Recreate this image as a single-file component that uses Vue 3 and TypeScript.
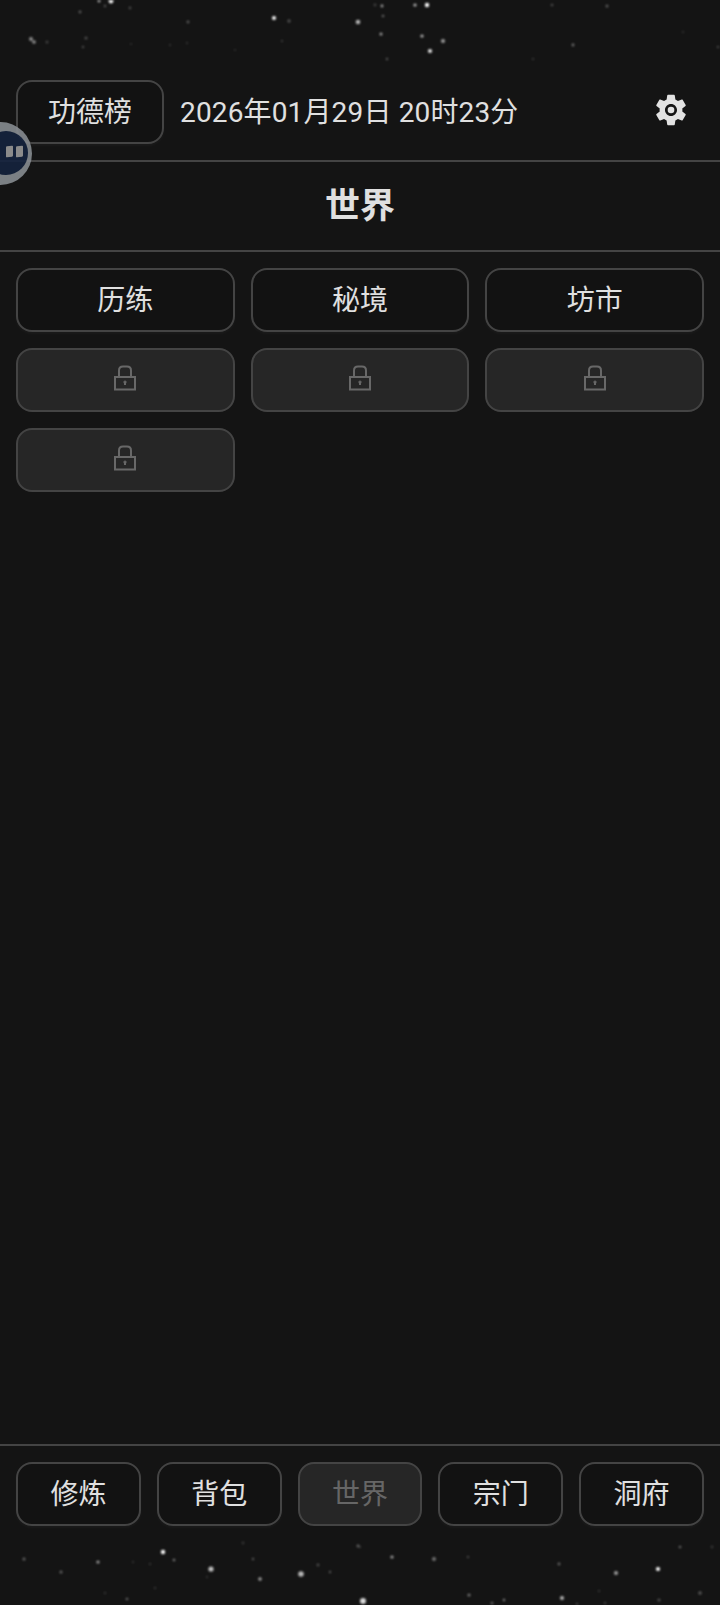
<script setup lang="ts">
interface Star {
  x: number
  y: number
  r: number
  o: number
}

// x, y, radius, opacity
const rawStars: number[][] = [
  [111, 1, 2.4, 1], [99, 1, 1.4, 0.7], [105, 6, 1.2, 0.3], [130, 8, 1.4, 0.22], [80, 12, 1.4, 0.3],
  [274, 18, 2, 1], [289, 21, 1.7, 0.25], [188, 22, 1.4, 0.3], [358, 22, 2.3, 0.7], [375, 5, 1.4, 0.2],
  [382, 6, 1.4, 0.6], [415, 5, 1.6, 0.7], [427, 5, 2.2, 1], [383, 16, 1.3, 0.35], [381, 34, 1.5, 0.6],
  [422, 36, 1.6, 0.7], [443, 41, 2, 0.6], [430, 51, 2.1, 0.9], [387, 59, 1.2, 0.3], [552, 5, 1.3, 0.25],
  [607, 6, 1.5, 0.3], [573, 45, 1.4, 0.4], [533, 59, 1.2, 0.15], [683, 32, 1.3, 0.1], [718, 47, 1.3, 0.2],
  [31, 39, 1.9, 0.55], [34, 42, 1.8, 0.55], [47, 42, 1.5, 0.2], [86, 38, 1.5, 0.25], [83, 47, 1.2, 0.25],
  [282, 41, 1.2, 0.16], [187, 43, 1.2, 0.12], [170, 45, 1.2, 0.12], [131, 44, 1.2, 0.1], [235, 50, 1.2, 0.1],
  [163, 1552, 2.2, 1], [174, 1560, 1.3, 0.45], [98, 1562, 1.6, 0.6], [24, 1559, 1.5, 0.35], [61, 1572, 1.5, 0.35],
  [211, 1569, 2.6, 0.75], [260, 1579, 1.8, 0.6], [301, 1574, 2.8, 0.7], [318, 1565, 1.4, 0.25], [330, 1572, 1.2, 0.3],
  [253, 1559, 1.2, 0.3], [243, 1543, 1.4, 0.15], [358, 1546, 1.4, 0.35], [127, 1599, 1.3, 0.35], [105, 1593, 1.2, 0.15],
  [155, 1588, 1.2, 0.15], [207, 1577, 1.2, 0.12], [150, 1564, 1.2, 0.15], [133, 1562, 1.2, 0.12], [392, 1557, 1.6, 0.6],
  [434, 1559, 2, 0.4], [468, 1557, 1.3, 0.2], [559, 1564, 1.4, 0.35], [616, 1573, 2, 0.6], [658, 1569, 2.1, 1],
  [680, 1547, 1.3, 0.35], [712, 1547, 1.4, 0.15], [363, 1601, 3, 0.85], [469, 1595, 1.6, 0.4], [504, 1600, 1.2, 0.5],
  [492, 1603, 1.5, 0.3], [562, 1598, 2, 0.7], [700, 1593, 1.7, 0.3], [659, 1600, 1.6, 0.25], [599, 1591, 1.2, 0.15],
  [605, 1603, 1.2, 0.2], [577, 1604, 1.2, 0.2], [360, 1547, 1.2, 0.15],
]

const stars: Star[] = rawStars.map(([x, y, r, o]) => ({ x, y, r, o }))

const worldItems = [
  { name: '历练', locked: false },
  { name: '秘境', locked: false },
  { name: '坊市', locked: false },
  { name: '', locked: true },
  { name: '', locked: true },
  { name: '', locked: true },
  { name: '', locked: true },
]

const tabs = [
  { name: '修炼', active: false },
  { name: '背包', active: false },
  { name: '世界', active: true },
  { name: '宗门', active: false },
  { name: '洞府', active: false },
]
</script>

<template>
  <div class="page">
    <svg class="stars" width="720" height="1605" viewBox="0 0 720 1605">
      <circle
        v-for="(s, i) in stars"
        :key="i"
        :cx="s.x"
        :cy="s.y"
        :r="s.r"
        :fill-opacity="s.o"
        fill="#fff"
      />
    </svg>

    <header class="top-bar">
      <button class="btn rank-btn">功德榜</button>
      <span class="date">2026年01月29日 20时23分</span>
      <svg class="gear" width="38" height="38" viewBox="0 0 24 24">
        <path
          fill="#e2e2e2"
          fill-rule="evenodd"
          d="M19.14 12.94c.04-.3.06-.61.06-.94 0-.32-.02-.64-.07-.94l2.03-1.58c.18-.14.23-.41.12-.61l-1.92-3.32c-.12-.22-.37-.29-.59-.22l-2.39.96c-.5-.38-1.03-.7-1.62-.94l-.36-2.54c-.04-.24-.24-.41-.48-.41h-3.84c-.24 0-.43.17-.47.41l-.36 2.54c-.59.24-1.13.57-1.62.94l-2.39-.96c-.22-.08-.47 0-.59.22L2.74 8.87c-.12.21-.08.47.12.61l2.03 1.58c-.05.3-.09.63-.09.94s.02.64.07.94l-2.03 1.58c-.18.14-.23.41-.12.61l1.92 3.32c.12.22.37.29.59.22l2.39-.96c.5.38 1.03.7 1.62.94l.36 2.54c.05.24.24.41.48.41h3.84c.24 0 .44-.17.47-.41l.36-2.54c.59-.24 1.13-.56 1.62-.94l2.39.96c.22.08.47 0 .59-.22l1.92-3.32c.12-.22.07-.47-.12-.61l-2.01-1.58zM12 15.8c-2.1 0-3.8-1.7-3.8-3.8s1.7-3.8 3.8-3.8 3.8 1.7 3.8 3.8-1.7 3.8-3.8 3.8z"
        />
        <circle cx="12" cy="12" r="2.1" fill="#e2e2e2" />
      </svg>
    </header>

    <h1 class="title">世界</h1>

    <main class="grid">
      <button
        v-for="(item, i) in worldItems"
        :key="i"
        :class="['btn', { locked: item.locked }]"
      >
        <template v-if="!item.locked">{{ item.name }}</template>
        <svg v-else class="lock" width="24" height="26" viewBox="0 0 24 26" fill="none" stroke="#686868" stroke-width="2">
          <path d="M6 12V5.500C6 3 7.500 1.500 10 1.500h4c2.500 0 4 1.500 4 4V12" />
          <rect x="2" y="12" width="20" height="12.500" />
          <path d="M12 17v3" />
          <circle cx="12" cy="17" r=".6" />
        </svg>
      </button>
    </main>

    <footer class="tabs">
      <button
        v-for="tab in tabs"
        :key="tab.name"
        :class="['btn', { 'tab-active': tab.active }]"
      >
        {{ tab.name }}
      </button>
    </footer>

    <div class="float-ball">
      <div class="ball-face">
        <i class="eye"></i>
        <i class="eye"></i>
      </div>
    </div>
  </div>
</template>

<style scoped>
.page {
  position: relative;
  width: 720px;
  height: 1605px;
  display: flex;
  flex-direction: column;
  overflow: hidden;
  background: #141414;
  color: #e0e0e0;
  font-family: Roboto, "Noto Sans CJK SC", sans-serif;
}

.stars {
  position: absolute;
  top: 0;
  left: 0;
  filter: blur(0.8px);
}

.btn {
  height: 64px;
  padding: 2px 0 0;
  border: 2px solid #444;
  border-radius: 16px;
  background: #121212;
  box-shadow: 0 2px 3px rgba(255, 255, 255, 0.03);
  color: #e0e0e0;
  font-family: inherit;
  font-size: 28px;
  line-height: 1;
}

.top-bar {
  position: relative;
  display: flex;
  align-items: center;
  padding: 80px 16px 16px;
  border-bottom: 2px solid #444;
}

.rank-btn {
  width: 148px;
  margin-right: 16px;
}

.date {
  margin-bottom: 4px;
  font-size: 28px;
  letter-spacing: 0.15px;
}

.gear {
  margin-left: auto;
  margin-right: 14px;
  margin-bottom: 5px;
}

.title {
  position: relative;
  margin: 0;
  height: 88px;
  line-height: 90px;
  text-align: center;
  font-size: 35px;
  font-weight: 700;
  border-bottom: 2px solid #444;
}

.grid {
  position: relative;
  flex: 1;
  display: grid;
  grid-template-columns: repeat(3, 1fr);
  grid-auto-rows: 64px;
  gap: 16px;
  padding: 16px;
}

.locked {
  display: flex;
  align-items: center;
  justify-content: center;
  padding: 0;
  background: #262626;
  box-shadow: none;
}

.lock {
  margin-bottom: 4px;
}

.tabs {
  position: relative;
  display: grid;
  grid-template-columns: repeat(5, 1fr);
  gap: 16px;
  padding: 16px 16px 79px;
  border-top: 2px solid #444;
}

.tab-active {
  background: #262626;
  color: #666;
  box-shadow: none;
}

.float-ball {
  position: absolute;
  left: -31px;
  top: 122px;
  width: 63px;
  height: 63px;
  border-radius: 50%;
  background: #8a8f94;
  opacity: 0.88;
  filter: blur(0.5px);
}

.ball-face {
  position: absolute;
  left: 15px;
  top: 9px;
  width: 44px;
  height: 44px;
  border-radius: 50%;
  background: #14233f;
  display: flex;
  justify-content: flex-end;
  align-items: center;
  gap: 3px;
  padding: 0 5px 4px 0;
  box-sizing: border-box;
}

.eye {
  width: 7px;
  height: 11px;
  background: #9c9c9c;
  border-radius: 1px;
  transform: skewY(-8deg);
}
</style>

<style>
html,
body {
  margin: 0;
  background: #141414;
}
</style>
